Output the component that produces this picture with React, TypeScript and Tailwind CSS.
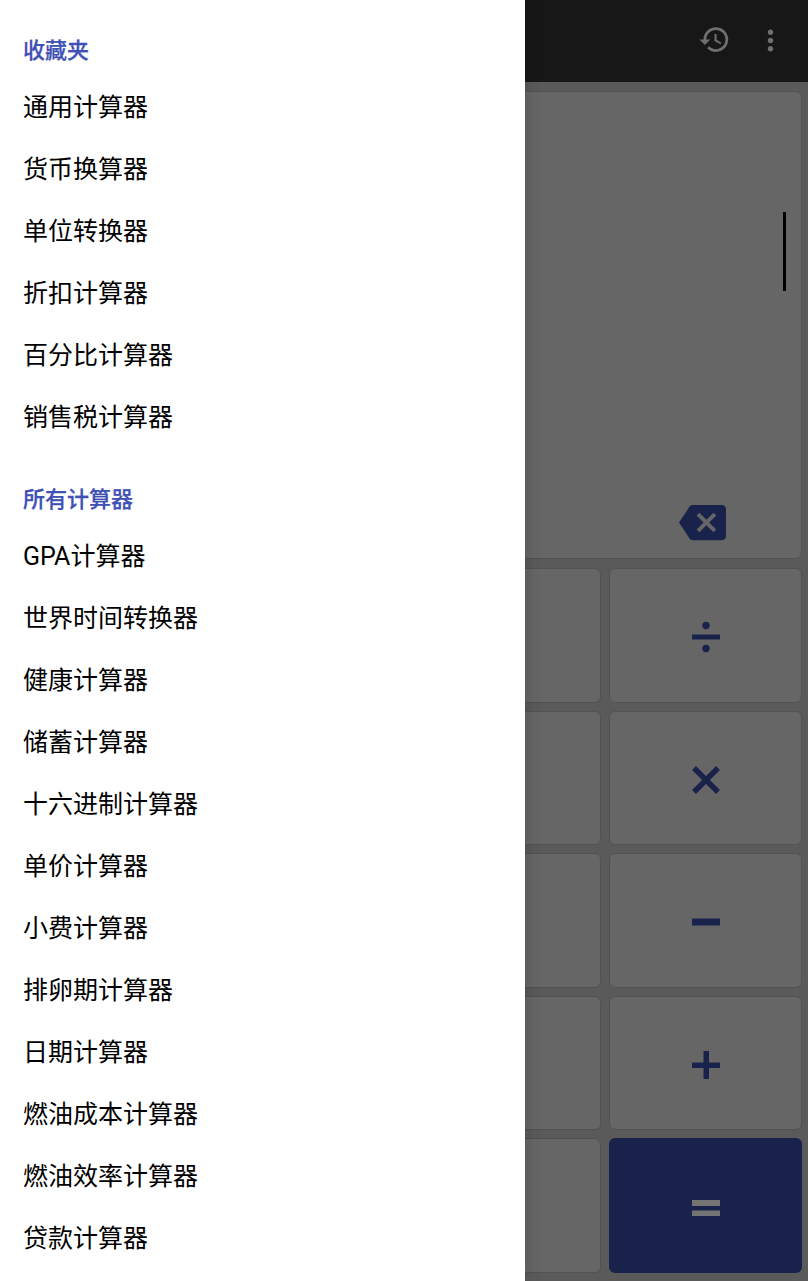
const favourites = ["通用计算器", "货币换算器", "单位转换器", "折扣计算器", "百分比计算器", "销售税计算器"];

const allCalculators = [
  "GPA计算器",
  "世界时间转换器",
  "健康计算器",
  "储蓄计算器",
  "十六进制计算器",
  "单价计算器",
  "小费计算器",
  "排卵期计算器",
  "日期计算器",
  "燃油成本计算器",
  "燃油效率计算器",
  "贷款计算器",
];

function MenuList({ title, items }: { title: string; items: string[] }) {
  return (
    <div>
      <div className="h-[52px] flex items-center px-[23px] text-[22px] font-medium [-webkit-text-stroke:0.25px_#3f51b5] text-[#3f51b5]">
        {title}
      </div>
      {items.map((item) => (
        <div key={item} className="h-[62px] flex items-center px-[23px] pt-[2px] text-[25px] text-black">
          {item}
        </div>
      ))}
    </div>
  );
}

function Divide() {
  return (
    <svg width="28" height="28" viewBox="0 0 28 28" fill="#19224a" className="overflow-visible">
      <circle cx="14" cy="2.5" r="3.7" />
      <rect x="0" y="11.5" width="28" height="5" />
      <circle cx="14" cy="25.5" r="3.7" />
    </svg>
  );
}

function Times() {
  return (
    <svg width="28" height="28" viewBox="0 0 28 28" fill="none" stroke="#19224a" strokeWidth="5.5">
      <path d="M2 2 L26 26 M26 2 L2 26" />
    </svg>
  );
}

function Minus() {
  return (
    <svg width="28" height="28" viewBox="0 0 28 28" fill="#19224a">
      <rect x="0" y="10.5" width="28" height="7" />
    </svg>
  );
}

function Plus() {
  return (
    <svg width="28" height="28" viewBox="0 0 28 28" fill="#19224a">
      <rect x="0" y="11.5" width="28" height="5.5" />
      <rect x="11.5" y="0" width="5.5" height="28" />
    </svg>
  );
}

function Equals() {
  return (
    <svg width="28" height="28" viewBox="0 0 28 28" fill="#747474">
      <rect x="0" y="6" width="28" height="6" />
      <rect x="0" y="16.5" width="28" height="5.5" />
    </svg>
  );
}

function Key({ children }: { children?: React.ReactNode }) {
  return (
    <div className="bg-[#666666] border border-[#525252] rounded-[6px] flex items-center justify-center pt-[4px]">
      {children}
    </div>
  );
}

const operators = [<Divide />, <Times />, <Minus />, <Plus />];

export default function App() {
  return (
    <div
      className="relative w-[808px] h-[1281px] overflow-hidden bg-[#5a5a5a]"
      style={{ fontFamily: 'Roboto, "Noto Sans CJK SC", sans-serif' }}
    >
      <div className="h-[82px] bg-[#171717] flex items-center justify-end gap-[23px] pr-[21px]">
        <svg width="33" height="33" viewBox="0 0 24 24" fill="#707070" className="mb-[3px]">
          <path d="M13 3c-4.97 0-9 4.03-9 9H1l3.89 3.89.07.14L9 12H6c0-3.87 3.13-7 7-7s7 3.13 7 7-3.13 7-7 7c-1.93 0-3.68-.79-4.94-2.06l-1.42 1.42C8.27 19.99 10.51 21 13 21c4.97 0 9-4.03 9-9s-4.03-9-9-9zm-1 5v5l4.28 2.54.72-1.21-3.5-2.08V8H12z" />
        </svg>
        <svg width="33" height="33" viewBox="0 0 24 24" fill="#707070" className="mb-[2px]">
          <path d="M12 8c1.1 0 2-.9 2-2s-.9-2-2-2-2 .9-2 2 .9 2 2 2zm0 2c-1.1 0-2 .9-2 2s.9 2 2 2 2-.9 2-2-.9-2-2-2zm0 6c-1.1 0-2 .9-2 2s.9 2 2 2 2-.9 2-2-.9-2-2-2z" />
        </svg>
      </div>

      <div className="h-[1199px] flex flex-col gap-[9px] pt-[9px] pl-[6px] pr-[6px] pb-[8px]">
        <div className="h-[468px] bg-[#666666] border border-[#525252] rounded-[6px] flex flex-col items-end pt-[120px] pr-[15px] pb-[12px]">
          <div className="w-[3px] h-[79px] bg-black" />
          <div className="mt-auto mr-[60px]">
            <svg width="47" height="47" viewBox="0 0 24 24" fill="#19224a" className="block">
              <path d="M22 3H7c-.69 0-1.23.35-1.59.88L0 12l5.41 8.11c.36.53.9.89 1.59.89h15c1.1 0 2-.9 2-2V5c0-1.1-.9-2-2-2zm-3 12.59L17.59 17 14 13.41 10.41 17 9 15.59 12.59 12 9 8.41 10.41 7 14 10.59 17.59 7 19 8.41 15.41 12 19 15.59z" />
            </svg>
          </div>
        </div>

        <div className="flex-1 grid grid-cols-4 grid-rows-5 gap-[8px]">
          {operators.map((op, idx) => (
            <div key={idx} className="contents">
              <Key />
              <Key />
              <Key />
              <Key>{op}</Key>
            </div>
          ))}
          <Key />
          <Key />
          <Key />
          <div className="bg-[#19224a] rounded-[6px] flex items-center justify-center pt-[4px]">
            <Equals />
          </div>
        </div>
      </div>

      {/* drawer sits over the calculator */}
      <div className="absolute left-0 top-0 bottom-0 w-[525px] bg-white pt-[24px] shadow-[0_0_16px_rgba(0,0,0,0.18)]">
        <MenuList title="收藏夹" items={favourites} />
        <div className="h-[25px]" />
        <MenuList title="所有计算器" items={allCalculators} />
      </div>
    </div>
  );
}
